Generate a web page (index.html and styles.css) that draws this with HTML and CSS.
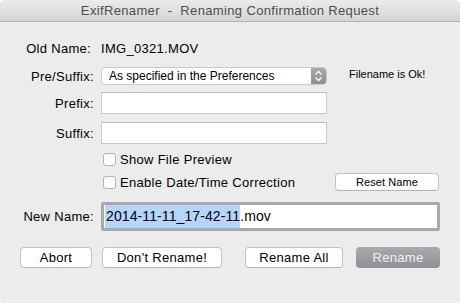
FILE: index.html
```html
<!DOCTYPE html>
<html>
<head>
<meta charset="utf-8">
<link rel="stylesheet" href="styles.css">
</head>
<body>
<div class="window">
  <div class="titlebar">ExifRenamer  -  Renaming Confirmation Request</div>
  <div class="content">
    <div class="row r1">
      <div class="label">Old Name:</div>
      <div class="value">IMG_0321.MOV</div>
    </div>
    <div class="row r2">
      <div class="label">Pre/Suffix:</div>
      <div class="popup">
        <span class="popup-text">As specified in the Preferences</span>
        <span class="stepper">
          <svg width="9" height="12" viewBox="0 0 9 12"><path d="M1.5 4.5 L4.5 1.5 L7.5 4.5 M1.5 7.5 L4.5 10.5 L7.5 7.5" fill="none" stroke="#fff" stroke-width="1.3"/></svg>
        </span>
      </div>
      <div class="status">Filename is Ok!</div>
    </div>
    <div class="row r3">
      <div class="label">Prefix:</div>
      <div class="field"></div>
    </div>
    <div class="row r4">
      <div class="label">Suffix:</div>
      <div class="field"></div>
    </div>
    <div class="row r5">
      <div class="label"></div>
      <div class="check"><span class="box"></span>Show File Preview</div>
    </div>
    <div class="row r6">
      <div class="label"></div>
      <div class="check"><span class="box"></span>Enable Date/Time Correction</div>
      <div class="btn reset">Reset Name</div>
    </div>
    <div class="row r7">
      <div class="label">New Name:</div>
      <div class="newname"><span class="sel">2014-11-11_17-42-11</span>.mov</div>
    </div>
    <div class="buttons">
      <div class="btn b-abort">Abort</div>
      <div class="btn b-dont">Don't Rename!</div>
      <div class="btn b-all">Rename All</div>
      <div class="btn b-rename">Rename</div>
    </div>
  </div>
</div>
</body>
</html>
```
FILE: styles.css
```css
* { box-sizing: border-box; }
html, body { margin: 0; padding: 0; background: #ffffff; }
body { font-family: "Liberation Sans", Arial, sans-serif; font-size: 13px; color: #000; letter-spacing: 0.3px; }

.window {
  width: 460px;
  height: 303px;
  background: #ececec;
  border-radius: 5px 5px 4px 4px;
  overflow: hidden;
}

.titlebar {
  height: 22px;
  line-height: 21px;
  text-align: center;
  white-space: pre;
  color: #4d4d4d;
  font-size: 13px;
  letter-spacing: 0.35px;
  background: linear-gradient(#ebebeb, #d5d5d5);
  border-bottom: 1px solid #b1b1b1;
}

.content { display: flex; flex-direction: column; }

.row { display: flex; align-items: center; }
.label { width: 95px; flex: none; text-align: right; padding-right: 1px; margin-right: 6px; }

.r1 { margin-top: 17px; height: 18px; }
.r1 .label { padding-right: 4px; }
.r2 { margin-top: 10px; height: 18px; }
.r3 { margin-top: 7px; height: 22px; }
.r4 { margin-top: 8px; height: 22px; }
.r5 { margin-top: 8px; height: 14px; }
.r6 { margin-top: 7px; height: 18px; }
.r7 { margin-top: 11px; height: 29px; }

.popup {
  width: 226px;
  height: 18px;
  display: flex;
  align-items: stretch;
  background: #fff;
  border: 1px solid #c9c9c9;
  border-radius: 4px;
  overflow: hidden;
  letter-spacing: 0;
}
.popup-text { flex: 1; padding-left: 7px; font-size: 12px; line-height: 16px; }
.stepper {
  width: 15px;
  display: flex;
  align-items: center;
  justify-content: center;
  background: linear-gradient(#a8a8ad, #8e8e93);
}

.status { margin-left: 22px; font-size: 11px; margin-top: -4px; letter-spacing: 0; }

.field {
  width: 226px;
  height: 22px;
  background: #fff;
  border: 1px solid #c8c8c8;
  border-top-color: #bdbdbd;
}

.check { display: flex; align-items: center; width: 234px; }
.box {
  width: 13px;
  height: 13px;
  margin-left: 2px;
  margin-right: 4px;
  background: #fff;
  border: 1px solid #b3b3b3;
  border-radius: 3px;
}

.btn {
  display: flex;
  align-items: center;
  justify-content: center;
  background: #fff;
  border: 1px solid #c3c3c3;
  border-bottom-color: #b5b5b5;
  border-radius: 4px;
}
.reset { width: 104px; height: 18px; font-size: 11px; letter-spacing: 0.1px; }

.newname {
  width: 339px;
  height: 29px;
  background: #fff;
  border: 3px solid #a9a9a9;
  border-radius: 2px;
  display: flex;
  align-items: stretch;
  line-height: 23px;
  padding-left: 1px;
  font-size: 14px;
  letter-spacing: 0.1px;
}
.sel { background: #b5d5fd; padding-left: 1px; }

.buttons { display: flex; margin-top: 16px; height: 21px; padding-left: 20px; }
.buttons .btn { height: 21px; }
.b-abort { width: 72px; }
.b-dont { width: 120px; margin-left: 10px; }
.b-all { width: 98px; margin-left: 23px; }
.b-rename {
  width: 84px;
  margin-left: 13px;
  border: none;
  color: #f2f2f2;
  background: linear-gradient(#a9a9ae, #8f8f94);
}
```
